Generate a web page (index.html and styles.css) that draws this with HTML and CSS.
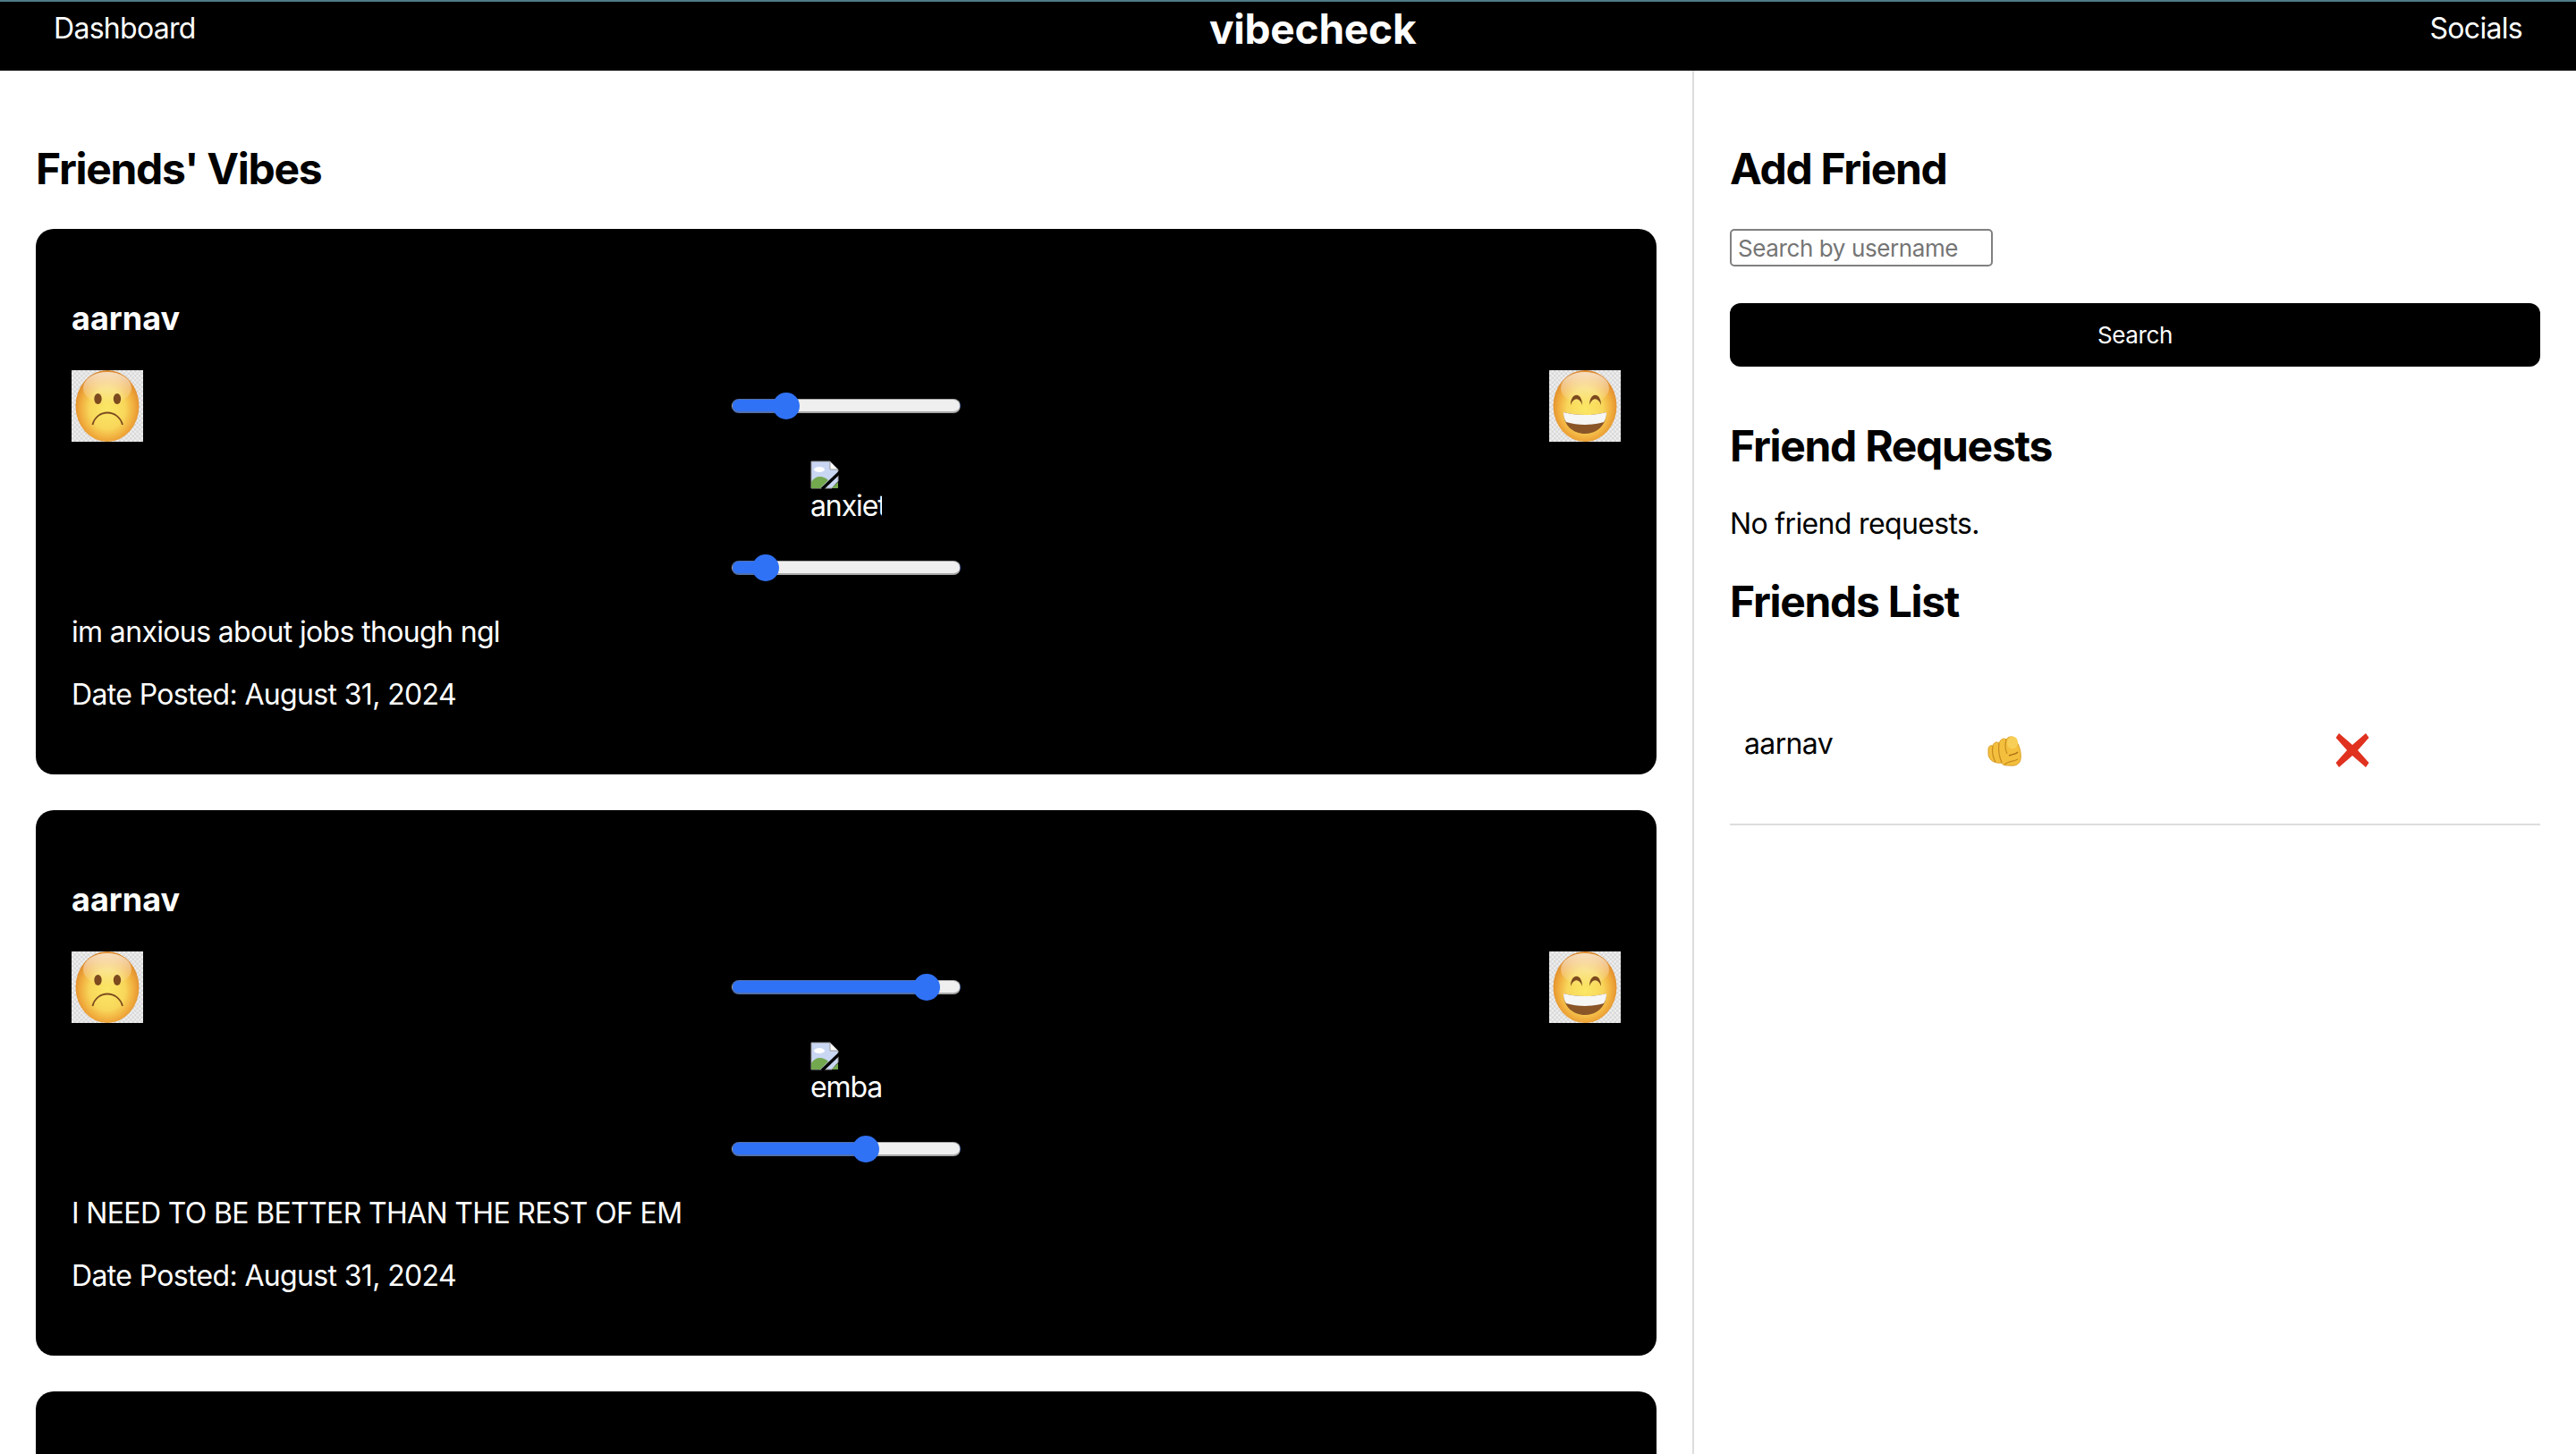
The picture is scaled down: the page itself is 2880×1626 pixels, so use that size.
FILE: index.html
```html
<!DOCTYPE html>
<html lang="en">
<head>
  <meta charset="UTF-8" />
  <title>vibecheck</title>
  <link rel="stylesheet" href="styles.css">
</head>
<body>

<svg class="defs" width="0" height="0" aria-hidden="true">
  <defs>
    <pattern id="checker" width="5" height="5" patternUnits="userSpaceOnUse">
      <rect width="5" height="5" fill="#eeeeee" />
      <rect width="2.500" height="2.500" fill="#d9d9d9" />
      <rect x="2.500" y="2.500" width="2.500" height="2.500" fill="#d9d9d9" />
    </pattern>
    <radialGradient id="face" cx="50%" cy="54%" r="56%">
      <stop offset="0" stop-color="#fbe766" />
      <stop offset="0.5" stop-color="#f8d75a" />
      <stop offset="0.76" stop-color="#f0ab3c" />
      <stop offset="0.92" stop-color="#e2902f" />
      <stop offset="1" stop-color="#c2752a" />
    </radialGradient>
    <linearGradient id="shine" x1="0" y1="0" x2="0" y2="1">
      <stop offset="0" stop-color="#fff" stop-opacity="0.7" />
      <stop offset="1" stop-color="#fff" stop-opacity="0" />
    </linearGradient>
    <symbol id="sad" viewBox="0 0 80 80">
      <rect width="80" height="80" fill="url(#checker)" />
      <ellipse cx="40" cy="40" rx="35.500" ry="40" fill="url(#face)" />
      <ellipse cx="40" cy="20" rx="27" ry="18" fill="url(#shine)" />
      <ellipse cx="29.500" cy="32" rx="4.200" ry="6" fill="#7c4a1e" />
      <ellipse cx="51" cy="32" rx="4.200" ry="6" fill="#7c4a1e" />
      <path d="M23.500 61 C28 43 52 43 57 61" fill="none" stroke="#7c4a1e" stroke-width="1.800" />
    </symbol>
    <symbol id="happy" viewBox="0 0 80 80">
      <rect width="80" height="80" fill="url(#checker)" />
      <ellipse cx="40" cy="40" rx="35.500" ry="40" fill="url(#face)" />
      <ellipse cx="40" cy="20" rx="27" ry="18" fill="url(#shine)" />
      <path d="M24 39 C24 24 37 24 37 39 C34 30 27 30 24 39Z" fill="#7c4a1e" />
      <path d="M45 39 C45 24 58 24 58 39 C55 30 48 30 45 39Z" fill="#7c4a1e" />
      <path d="M16 47 C30 51 50 51 64 47 C64 62 53 71 40 71 C27 71 16 62 16 47Z" fill="#8a5527" />
      <path d="M16 47 C30 51 50 51 64 47 C64 52 63 55 61 58 C48 62 32 62 19 58 C17 55 16 52 16 47Z" fill="#f6f6f4" />
    </symbol>
    <symbol id="broken" viewBox="0 0 32 32">
      <path d="M1 1H22L31 10V23L24 31H1Z" fill="#c9d7f3" stroke="#9a9a9a" stroke-width="1" />
      <path d="M22 1V10H31Z" fill="#fff" stroke="#9a9a9a" stroke-width="1" />
      <ellipse cx="10" cy="10" rx="6" ry="3" fill="#fff" />
      <path d="M1 31V24C6 16 14 17 20 22L11 31Z" fill="#73a84f" />
      <path d="M24 31L31 24V31Z" fill="#73a84f" />
      <path d="M13 32L33 13" stroke="#000" stroke-width="3.500" />
    </symbol>
  </defs>
</svg>

<nav class="topbar">
  <a class="nav-link" href="#">Dashboard</a>
  <a class="brand" href="#">vibecheck</a>
  <a class="nav-link" href="#">Socials</a>
</nav>

<div class="layout">
  <main class="feed">
    <h2 class="title">Friends' Vibes</h2>

    <article class="vibe">
      <h3 class="vibe-user">aarnav</h3>
      <div class="mood">
        <svg class="emoji"><use href="#sad" /></svg>
        <div class="mood-controls">
          <input class="slider" type="range" min="0" max="100" value="20" style="--fill:20%" />
          <div class="broken-img">
            <svg class="broken-icon"><use href="#broken" /></svg>
            <span class="broken-alt">anxiety</span>
          </div>
          <input class="slider" type="range" min="0" max="100" value="10" style="--fill:10%" />
        </div>
        <svg class="emoji"><use href="#happy" /></svg>
      </div>
      <p class="vibe-text">im anxious about jobs though ngl</p>
      <p class="vibe-text">Date Posted: August 31, 2024</p>
    </article>

    <article class="vibe">
      <h3 class="vibe-user">aarnav</h3>
      <div class="mood">
        <svg class="emoji"><use href="#sad" /></svg>
        <div class="mood-controls">
          <input class="slider" type="range" min="0" max="100" value="90" style="--fill:90%" />
          <div class="broken-img">
            <svg class="broken-icon"><use href="#broken" /></svg>
            <span class="broken-alt">embarrassment</span>
          </div>
          <input class="slider" type="range" min="0" max="100" value="60" style="--fill:60%" />
        </div>
        <svg class="emoji"><use href="#happy" /></svg>
      </div>
      <p class="vibe-text">I NEED TO BE BETTER THAN THE REST OF EM</p>
      <p class="vibe-text">Date Posted: August 31, 2024</p>
    </article>

    <article class="vibe"></article>
  </main>

  <aside class="side">
    <h2 class="title">Add Friend</h2>
    <input class="search-input" type="text" placeholder="Search by username" />
    <button class="search-btn" type="button">Search</button>

    <h2 class="title requests-title">Friend Requests</h2>
    <p class="side-text">No friend requests.</p>

    <h2 class="title list-title">Friends List</h2>
    <div class="friend-row">
      <span class="friend-name">aarnav</span>
      <svg class="friend-icon" viewBox="0 0 40 40" aria-label="poke">
        <path d="M3 19C3 15 6 14 8 15C9 11 12 10 15 12C17 7 20 6 23 8C26 3 34 4 35 11C38 16 40 23 39 30C38 36 33 38 26 37C22 37 19 37 18 34C11 35 4 32 3 25Z" fill="#f3bf3d" stroke="#dca02b" stroke-width="1" />
        <path d="M8 15C7 21 8 28 11 33M15 12C14 19 15 27 18 34M23 8C21 15 22 20 24 24" fill="none" stroke="#c98a1f" stroke-width="1.200" />
        <ellipse cx="30" cy="11.500" rx="6" ry="7" fill="#f8cf56" />
        <path d="M26 26C30 24 33 25 36 22" fill="none" stroke="#a96f16" stroke-width="1.400" />
        <path d="M21 36C25 32 31 33 36 30" fill="none" stroke="#c98a1f" stroke-width="1.200" />
      </svg>
      <svg class="friend-icon" viewBox="0 0 40 40" aria-label="remove">
        <path d="M1.500 6L5 1L20 14L35 1L38.500 6L26 20L38.500 34L35 39L20 26L5 39L1.500 34L14 20Z" fill="#e0321f" />
      </svg>
    </div>
  </aside>
</div>

</body>
</html>
```

FILE: styles.css
```css
* { box-sizing: border-box; }
html, body { height: 100%; }
body { margin: 0; font-family: Inter, "Liberation Sans", sans-serif; background: white; color: black; overflow: hidden; }
.defs { position: absolute; }

.topbar {
  display: flex; justify-content: space-between; align-items: flex-start;
  height: 79px; padding: 11px 60px 0;
  background: black; border-top: 2px solid #4f7b86;
}
.nav-link { color: white; text-decoration: none; font-size: 32px; line-height: 38px; letter-spacing: -0.7px; }
.brand { color: white; text-decoration: none; font-size: 46px; font-weight: 700; line-height: 38px; letter-spacing: -0.2px; }

.layout { display: flex; height: calc(100% - 79px); overflow: hidden; }
.feed { width: 1894px; padding: 82px 40px 0; border-right: 2px solid #ddd; }
.side { flex: 1; padding: 82px 40px 0; }

.title { margin: 0 0 39px; font-size: 48px; line-height: 56px; font-weight: 700; letter-spacing: -1.3px; }

.vibe { height: 610px; margin-bottom: 40px; padding: 76px 40px 0; background: black; color: white; border-radius: 20px; }
.vibe-user { margin: 0 0 34px; font-size: 36px; line-height: 48px; font-weight: 700; }
.mood { display: flex; justify-content: space-between; align-items: flex-start; }
.emoji { width: 80px; height: 80px; }
.mood-controls { display: flex; flex-direction: column; align-items: center; width: 256px; }

.slider {
  -webkit-appearance: none; appearance: none; display: block;
  width: 256px; height: 30px; margin: 25px 0 0; background: transparent;
}
.slider::-webkit-slider-runnable-track {
  height: 16px; border-radius: 8px;
  background: linear-gradient(to right, #3072f6 var(--fill), #efefef var(--fill));
  border: solid rgba(110, 110, 110, 0.55);
  border-width: 1px 1px 2px;
}
.slider::-webkit-slider-thumb {
  -webkit-appearance: none; width: 30px; height: 30px; margin-top: -8px;
  border-radius: 50%; background: #3072f6;
}

.broken-img { display: flex; flex-direction: column; width: 80px; height: 80px; margin: 46px 0 0; overflow: hidden; }
.broken-icon { width: 32px; height: 32px; flex: none; }
.broken-alt { font-size: 32px; line-height: 38px; white-space: nowrap; letter-spacing: -1.1px; }

.vibe-text { margin: 0 0 31px; font-size: 32px; line-height: 39px; letter-spacing: -0.65px; }
.mood + .vibe-text { margin-top: 37px; }

.search-input {
  display: block; width: 294px; height: 42px; padding: 0 7px;
  border: 2px solid #808080; border-radius: 5px;
  font-family: inherit; font-size: 26px; letter-spacing: -0.4px;
}
.search-input::placeholder { color: #757575; }
.search-btn {
  display: block; width: 100%; height: 71px; margin-top: 41px;
  background: black; color: white; border: none; border-radius: 12px;
  font-family: inherit; font-size: 26px; letter-spacing: -0.4px;
}
.requests-title { margin: 61px 0 0; }
.side-text { margin: 39px 0 0; font-size: 32px; line-height: 39px; letter-spacing: -0.65px; }
.list-title { margin: 40px 0 0; }

.friend-row {
  display: grid; grid-template-columns: 286px 390px 40px; align-items: start;
  height: 111px; margin-top: 111px;
  border-bottom: 2px solid #ddd;
}
.friend-name { padding-left: 16px; font-size: 32px; line-height: 39px; letter-spacing: -0.65px; }
.friend-icon { width: 40px; height: 40px; margin-top: 7px; }
```
